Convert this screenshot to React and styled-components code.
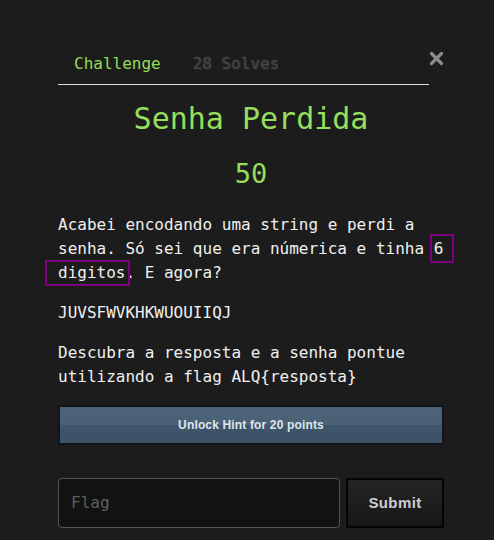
import React from "react";
import styled, { createGlobalStyle } from "styled-components";

const GlobalStyle = createGlobalStyle`
  html, body {
    margin: 0;
    padding: 0;
    background-color: #1c1c1c;
  }
  body {
    font-family: "DejaVu Sans Mono", "Liberation Mono", monospace;
  }
`;

const Modal = styled.div`
  width: 386px;
  padding: 44px 50px 0 58px;
  color: #f0f0f0;
`;

const Header = styled.div`
  display: flex;
  align-items: flex-start;
`;

const Tabs = styled.nav`
  flex: 1;
  display: flex;
  border-bottom: 1px solid #dcdcdc;
`;

const Tab = styled.a`
  padding: 8px 16px;
  font-size: 16px;
  line-height: 24px;
  text-decoration: none;
  cursor: pointer;
  color: ${(p) => (p.active ? "#93dc58" : "#464646")};
  text-shadow: ${(p) => (p.active ? "none" : "0 0 2px rgba(90, 90, 90, 0.6)")};
`;

const CloseButton = styled.button`
  width: 15px;
  height: 15px;
  margin-top: 7px;
  padding: 0;
  border: none;
  background: transparent;
  cursor: pointer;
  display: flex;
  align-items: center;
  justify-content: center;
`;

const Title = styled.h2`
  margin: 16px 0 0;
  text-align: center;
  font-size: 30px;
  font-weight: normal;
  line-height: 36px;
  color: #96df5c;
`;

const Points = styled.h3`
  margin: 21px 0 0;
  text-align: center;
  font-size: 27px;
  font-weight: normal;
  line-height: 32px;
  color: #96df5c;
`;

const Description = styled.div`
  margin-top: 23px;
  font-size: 16px;
  line-height: 24px;

  p {
    margin: 0 0 16px;
  }
`;

const Mark = styled.span`
  position: relative;

  &::after {
    content: "";
    position: absolute;
    top: ${(p) => p.$top}px;
    bottom: ${(p) => p.$bottom}px;
    left: ${(p) => p.$left}px;
    right: ${(p) => p.$right}px;
    border: 2px solid #800080;
    pointer-events: none;
  }
`;

const HintButton = styled.button`
  display: block;
  width: 100%;
  height: 40px;
  margin-top: 15px;
  border: 2px solid #111418;
  background: linear-gradient(to bottom, #4b6277 0%, #4a6176 50%, #3e556a 50%, #3c5266 100%);
  color: #dfe6ee;
  font-family: "Liberation Sans", Arial, sans-serif;
  font-weight: bold;
  font-size: 12px;
  letter-spacing: 0.15px;
  cursor: pointer;
`;

const SubmitRow = styled.form`
  display: flex;
  gap: 6px;
  margin-top: 33px;
`;

const FlagInput = styled.input`
  flex: 1;
  height: 50px;
  box-sizing: border-box;
  padding: 0 12px 2px;
  border: 1px solid #555;
  border-radius: 4px;
  background-color: #121212;
  color: #eee;
  font-family: "DejaVu Sans Mono", "Liberation Mono", monospace;
  font-size: 16px;
  outline: none;

  &::placeholder {
    color: #5e5e5e;
  }
`;

const SubmitButton = styled.button`
  width: 98px;
  height: 50px;
  box-sizing: border-box;
  padding: 0 0 2px;
  border: 2px solid #050505;
  background: linear-gradient(to bottom, #242424, #171717);
  color: #cfcfcf;
  font-family: "Liberation Sans", Arial, sans-serif;
  font-weight: bold;
  font-size: 15px;
  letter-spacing: 0.4px;
  cursor: pointer;
`;

const App = () => {
  return (
    <>
      <GlobalStyle />
      <Modal>
        <Header>
          <Tabs>
            <Tab active>Challenge</Tab>
            <Tab>28 Solves</Tab>
          </Tabs>
          <CloseButton aria-label="Close">
            <svg width="15" height="15" viewBox="0 0 15 15">
              <path
                d="M2.5 2.5 L12.5 12.5 M12.5 2.5 L2.5 12.5"
                stroke="#8a8a8a"
                strokeWidth="3.2"
                strokeLinecap="round"
              />
            </svg>
          </CloseButton>
        </Header>

        <Title>Senha Perdida</Title>
        <Points>50</Points>

        <Description>
          <p>
            Acabei encodando uma string e perdi a senha. Só sei que era númerica e tinha{" "}
            <Mark $top={-5} $bottom={-5} $left={-4} $right={-11}>6</Mark>{" "}
            <Mark $top={-3} $bottom={-4} $left={-13} $right={-5}>digitos</Mark>. E agora?
          </p>
          <p>JUVSFWVKHKWUOUIIQJ</p>
          <p>{"Descubra a resposta e a senha pontue utilizando a flag ALQ{resposta}"}</p>
        </Description>

        <HintButton>Unlock Hint for 20 points</HintButton>

        <SubmitRow onSubmit={(e) => e.preventDefault()}>
          <FlagInput type="text" placeholder="Flag" />
          <SubmitButton type="submit">Submit</SubmitButton>
        </SubmitRow>
      </Modal>
    </>
  );
};

export default App;
